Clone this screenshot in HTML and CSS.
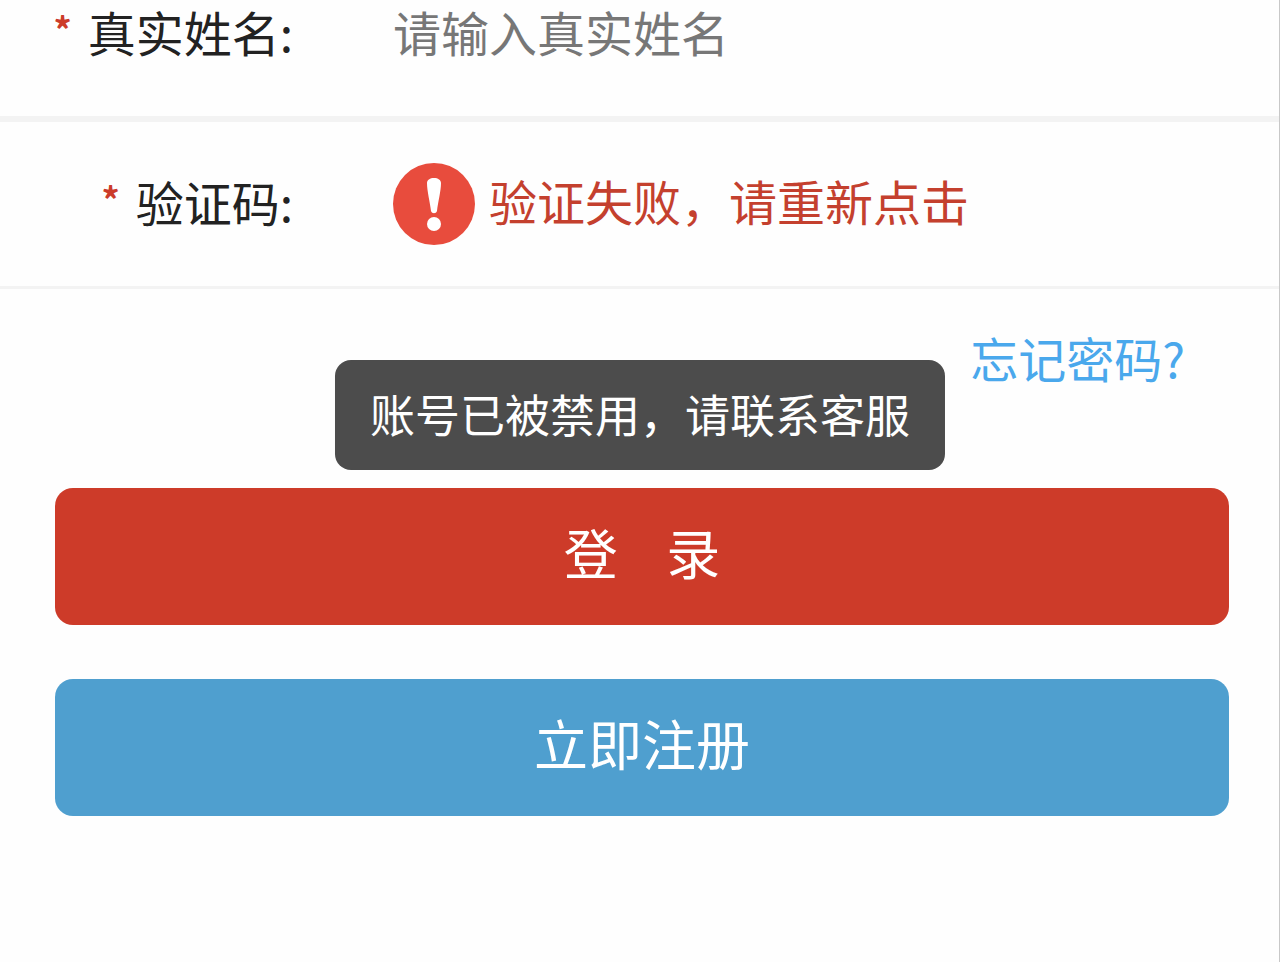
FILE: index.html
```html
<!DOCTYPE html>
<html lang="zh-CN">
<head>
    <meta charset="UTF-8">
    <meta name="viewport" content="width=device-width, initial-scale=1">
    <title>登录</title>
    <link rel="stylesheet" href="styles.css">
</head>
<body>
    <form class="login">
        <div class="row row-name">
            <label class="row-label" for="realname"><span class="required">*</span>真实姓名:</label>
            <input class="row-input" type="text" id="realname" placeholder="请输入真实姓名">
        </div>
        <div class="row row-captcha">
            <label class="row-label" for="captcha"><span class="required">*</span>验证码:</label>
            <button class="captcha" type="button" id="captcha">
                <svg class="captcha-icon" viewBox="0 0 82 82" aria-hidden="true">
                    <circle cx="41" cy="41" r="41" fill="#e84c3d"/>
                    <path d="M34 20C34 17 37 15 41 15C45 15 48 17 48 20C48 28 45 39 44 48C43 51 39 51 38 48C37 39 34 28 34 20Z" fill="#fff"/>
                    <circle cx="41" cy="61" r="7" fill="#fff"/>
                </svg>
                <span class="captcha-text">验证失败，请重新点击</span>
            </button>
        </div>

        <div class="actions">
            <a class="forgot" href="#">忘记密码?</a>
            <button class="btn btn-login" type="submit">登&nbsp;&nbsp;&nbsp;&nbsp;录</button>
            <button class="btn btn-register" type="button">立即注册</button>
        </div>
    </form>

    <div class="toast" role="alert">账号已被禁用，请联系客服</div>
</body>
</html>
```
FILE: styles.css
```css
* {
    box-sizing: border-box;
}

body {
    margin: 0;
    font-family: "Noto Sans CJK SC", sans-serif;
    font-size: 48px;
    line-height: 62px;
    color: #222;
    background-color: #fefefe;
}

button,
input {
    font: inherit;
    border: none;
    padding: 0;
    background: none;
}

.login {
    min-height: 100vh;
    border-right: 1px solid #c8c8c8;
}

.row {
    display: flex;
    align-items: center;
    gap: 100px;
}

.row-name {
    padding-bottom: 48px;
    border-bottom: 6px solid #f3f3f3;
}

.row-captcha {
    padding: 41px 0;
    border-bottom: 3px solid #f3f3f3;
}

.row-label {
    display: flex;
    flex: 0 0 293px;
    justify-content: flex-end;
    gap: 16px;
    padding-bottom: 6px;
}

.required {
    font-size: 36px;
    font-weight: bold;
    line-height: 56px;
    color: #cc3b2a;
}

.row-input {
    flex: 1;
    min-width: 0;
    height: 68px;
    padding-bottom: 6px;
    color: #222;
    outline: none;
}

.row-input::placeholder {
    color: #777;
    opacity: 1;
}

.captcha {
    display: flex;
    align-items: center;
    gap: 14px;
    color: #c4402e;
    cursor: pointer;
}

.captcha-icon {
    width: 82px;
    height: 82px;
}

.captcha-text {
    padding-bottom: 8px;
}

.actions {
    display: flex;
    flex-direction: column;
    padding: 37px 50px 54px 55px;
}

.forgot {
    align-self: flex-end;
    margin-right: 44px;
    margin-bottom: 100px;
    color: #4aa8ec;
    text-decoration: none;
}

.btn {
    height: 137px;
    padding-bottom: 10px;
    border-radius: 18px;
    font-size: 54px;
    color: #fff;
    cursor: pointer;
}

.btn-login {
    margin-bottom: 54px;
    background-color: #cd3b29;
}

.btn-register {
    background-color: #4f9fcf;
}

.toast {
    position: fixed;
    top: 360px;
    left: 50%;
    transform: translateX(-50%);
    padding: 23px 35px 25px;
    border-radius: 16px;
    font-size: 45px;
    white-space: nowrap;
    color: #fff;
    background-color: #4c4c4c;
}
```
